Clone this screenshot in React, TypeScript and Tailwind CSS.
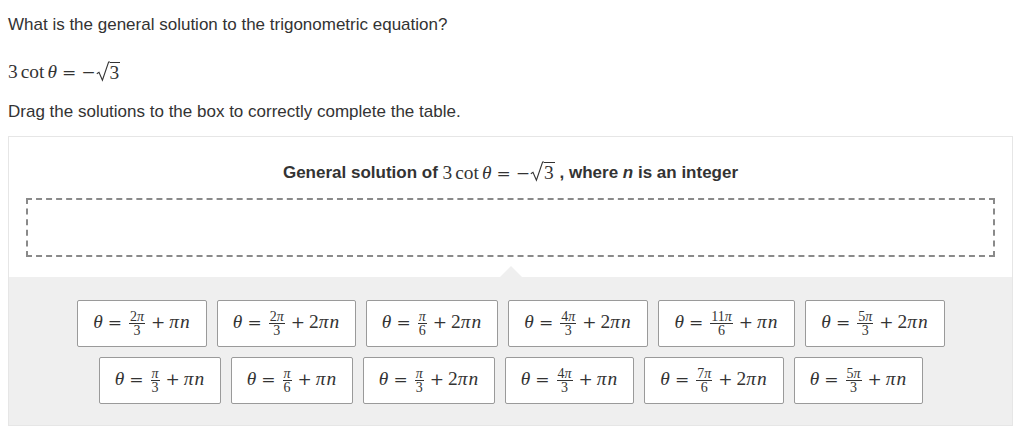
import React from "react";

const SERIF = "font-['Liberation_Serif','DejaVu_Serif',serif]";

function I({ children }: { children: React.ReactNode }) {
  return <span className="italic">{children}</span>;
}

// Times operators are narrow next to Computer Modern; DejaVu's are closer
function Op({ children }: { children: React.ReactNode }) {
  return <span className="font-['DejaVu_Serif',serif] text-[0.88em]">{children}</span>;
}

function Frac({ num, den }: { num: React.ReactNode; den: React.ReactNode }) {
  return (
    <span className="mx-[2px] inline-flex flex-col items-center align-[7px] text-[14px] leading-[12px]">
      <span className="px-[1px]">{num}</span>
      <span className="w-full border-t border-[#333] px-[1px] pt-[1px] text-center">{den}</span>
    </span>
  );
}

function Sqrt({ children }: { children: React.ReactNode }) {
  return (
    <span className="inline-flex items-end align-[-0.2em]">
      <svg width="14" height="21" viewBox="0 0 14 21" className="mb-[1px]">
        <path d="M0.8 12.8 L3 11.4 L6.4 19.2 L12.6 1 L14 1" fill="none" stroke="#333" strokeWidth="1.1" />
      </svg>
      <span className="mt-[1px] border-t border-[#333] pr-[1px] leading-[20px]">{children}</span>
    </span>
  );
}

function Equation() {
  return (
    <span className={`${SERIF} font-normal text-[19.4px] text-[#333]`}>
      3<span className="ml-[3px]">cot</span>
      <span className="ml-[3px]">
        <I>θ</I>
      </span>
      <span className="mx-[5px]">
        <Op>=</Op>
      </span>
      <Op>−</Op>
      <Sqrt>3</Sqrt>
    </span>
  );
}

type Sol = { num: React.ReactNode; den: string; tail: "pi" | "2pi"; w: string };

const pi = <I>π</I>;

const row1: Sol[] = [
  { num: <>2{pi}</>, den: "3", tail: "pi", w: "w-[130px]" },
  { num: <>2{pi}</>, den: "3", tail: "2pi", w: "w-[139px]" },
  { num: pi, den: "6", tail: "2pi", w: "w-[132px]" },
  { num: <>4{pi}</>, den: "3", tail: "2pi", w: "w-[140px]" },
  { num: <>11{pi}</>, den: "6", tail: "pi", w: "w-[137px]" },
  { num: <>5{pi}</>, den: "3", tail: "2pi", w: "w-[140px]" },
];

const row2: Sol[] = [
  { num: pi, den: "3", tail: "pi", w: "w-[122px]" },
  { num: pi, den: "6", tail: "pi", w: "w-[122px]" },
  { num: pi, den: "3", tail: "2pi", w: "w-[132px]" },
  { num: <>4{pi}</>, den: "3", tail: "pi", w: "w-[129px]" },
  { num: <>7{pi}</>, den: "6", tail: "2pi", w: "w-[140px]" },
  { num: <>5{pi}</>, den: "3", tail: "pi", w: "w-[129px]" },
];

function Tile({ s }: { s: Sol }) {
  return (
    <div
      className={`${s.w} ${SERIF} flex h-[47px] items-center justify-center rounded-[2px] border border-[#9a9a9a] bg-white text-[19.4px] text-[#333] leading-none`}
    >
      <span className="whitespace-nowrap">
        <I>θ</I>
        <span className="mx-[5px]">
          <Op>=</Op>
        </span>
        <Frac num={s.num} den={s.den} />
        <span className="mx-[4px]">
          <Op>+</Op>
        </span>
        {s.tail === "2pi" ? "2" : null}
        <I>π</I>
        <span className="ml-[1px]">
          <I>n</I>
        </span>
      </span>
    </div>
  );
}

export default function App() {
  return (
    <div className="min-h-screen bg-white font-['Liberation_Sans',Arial,sans-serif] text-[17px] text-[#333]">
      <div className="px-2 pt-[15px]">
        <p className="leading-[20px]">What is the general solution to the trigonometric equation?</p>
        <p className="mt-[24px] h-[26px] leading-[26px]">
          <Equation />
        </p>
        <p className="mt-[17px] leading-[20px]">Drag the solutions to the box to correctly complete the table.</p>
      </div>

      <div className="ml-2 mt-[14px] w-[1005px] border border-[#e6e6e6]">
        <div className="bg-white px-[17px] pt-[25px] pb-[20px]">
          <div className="flex h-[22px] items-center justify-center font-bold leading-[22px]">
            <span className="whitespace-nowrap">
              General solution of <Equation /> , where <span className="italic">n</span> is an integer
            </span>
          </div>
          <div className="mt-[14px] h-[59px] border-2 border-dashed border-[#8a8a8a]" />
        </div>

        <div className="relative flex flex-col gap-[10px] bg-[#efefef] pt-[23px] pb-[21px]">
          <span className="absolute left-1/2 top-[-11px] h-0 w-0 -translate-x-1/2 border-x-[11px] border-b-[11px] border-x-transparent border-b-[#efefef]" />
          <div className="flex justify-center gap-[10px]">
            {row1.map((s, i) => (
              <Tile key={i} s={s} />
            ))}
          </div>
          <div className="flex justify-center gap-[10px]">
            {row2.map((s, i) => (
              <Tile key={i} s={s} />
            ))}
          </div>
        </div>
      </div>
    </div>
  );
}
